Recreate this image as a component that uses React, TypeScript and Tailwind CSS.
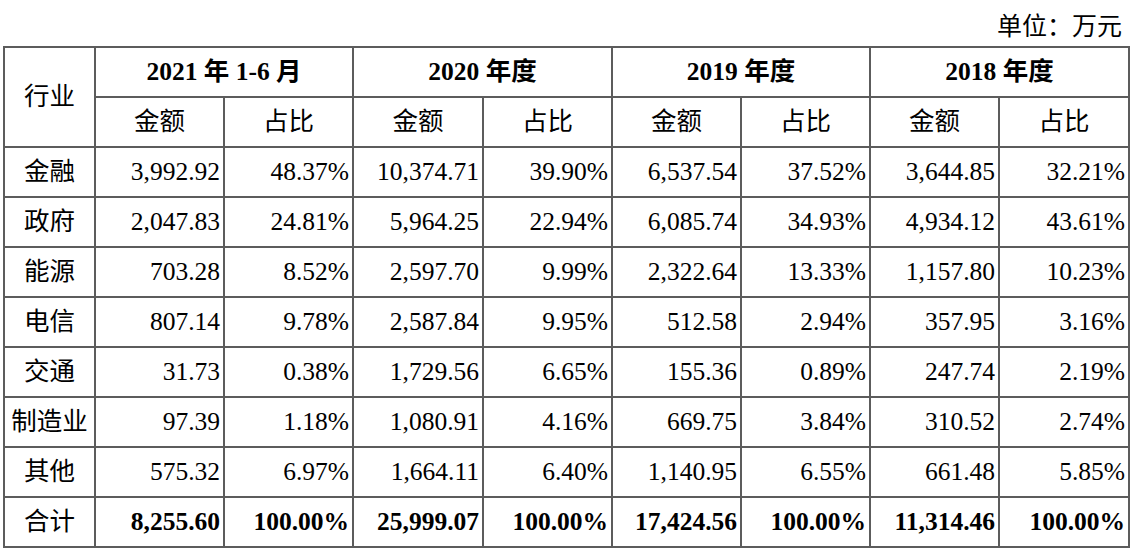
import React from "react";

const rows: [string, string[]][] = [
  ["金融", ["3,992.92", "48.37%", "10,374.71", "39.90%", "6,537.54", "37.52%", "3,644.85", "32.21%"]],
  ["政府", ["2,047.83", "24.81%", "5,964.25", "22.94%", "6,085.74", "34.93%", "4,934.12", "43.61%"]],
  ["能源", ["703.28", "8.52%", "2,597.70", "9.99%", "2,322.64", "13.33%", "1,157.80", "10.23%"]],
  ["电信", ["807.14", "9.78%", "2,587.84", "9.95%", "512.58", "2.94%", "357.95", "3.16%"]],
  ["交通", ["31.73", "0.38%", "1,729.56", "6.65%", "155.36", "0.89%", "247.74", "2.19%"]],
  ["制造业", ["97.39", "1.18%", "1,080.91", "4.16%", "669.75", "3.84%", "310.52", "2.74%"]],
  ["其他", ["575.32", "6.97%", "1,664.11", "6.40%", "1,140.95", "6.55%", "661.48", "5.85%"]],
];
const total = ["8,255.60", "100.00%", "25,999.07", "100.00%", "17,424.56", "100.00%", "11,314.46", "100.00%"];
const years = ["2021 年 1-6 月", "2020 年度", "2019 年度", "2018 年度"];
const widths = [91, 129, 129, 130, 129, 129, 129, 129, 130];

const cell = "border-2 border-[#5c5c5c] p-0";

export default function App() {
  return (
    <div
      className="w-[1137px] h-[557px] bg-white text-black text-[25.5px]"
      style={{ fontFamily: '"Liberation Serif", "Noto Sans CJK SC", serif' }}
    >
      <div className="h-[46px] pt-[12px] pr-[15px] text-right leading-[30px] text-[25px]">单位：万元</div>
      <table className="ml-[3px] border-collapse table-fixed" style={{ width: 1124 }}>
        <colgroup>
          {widths.map((w, i) => (
            <col key={i} style={{ width: w }} />
          ))}
        </colgroup>
        <tbody>
          <tr className="h-[50px]">
            <td rowSpan={2} className={`${cell} text-center align-middle`}>
              行业
            </td>
            {years.map((y) => (
              <td key={y} colSpan={2} className={`${cell} text-center font-bold`}>
                {y}
              </td>
            ))}
          </tr>
          <tr className="h-[50px]">
            {years.map((y) => (
              <React.Fragment key={y}>
                <td className={`${cell} text-center`}>金额</td>
                <td className={`${cell} text-center`}>占比</td>
              </React.Fragment>
            ))}
          </tr>
          {rows.map(([name, vals]) => (
            <tr key={name} className="h-[50px]">
              <td className={`${cell} text-center`}>{name}</td>
              {vals.map((v, i) => (
                <td key={i} className={`${cell} text-right pr-[3px]`}>
                  {v}
                </td>
              ))}
            </tr>
          ))}
          <tr className="h-[50px]">
            <td className={`${cell} text-center`}>合计</td>
            {total.map((v, i) => (
              <td key={i} className={`${cell} text-right pr-[3px] font-bold`}>
                {v}
              </td>
            ))}
          </tr>
        </tbody>
      </table>
    </div>
  );
}
